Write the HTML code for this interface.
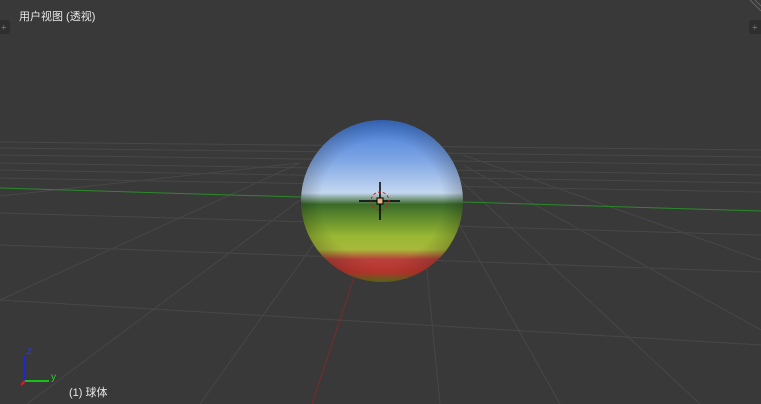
<!DOCTYPE html>
<html><head><meta charset="utf-8"><style>
html,body{margin:0;padding:0;background:#393939;width:761px;height:404px;overflow:hidden}
.t{position:absolute;font-family:"Liberation Sans","Noto Sans CJK SC",sans-serif;font-size:11px;color:#e6e6e6}
</style></head><body>
<svg width="761" height="404" style="position:absolute;left:0;top:0">
<defs>
<linearGradient id="sp" x1="0" y1="0" x2="0" y2="1">
<stop offset="0" stop-color="#3f78d8"/>
<stop offset="0.25" stop-color="#7fa6e4"/>
<stop offset="0.45" stop-color="#c4d7f0"/>
<stop offset="0.52" stop-color="#3a6a2a"/>
<stop offset="0.6" stop-color="#5f8a2c"/>
<stop offset="0.72" stop-color="#9ab834"/>
<stop offset="0.8" stop-color="#a8b83a"/>
<stop offset="0.86" stop-color="#b8403a"/>
<stop offset="0.94" stop-color="#c83a30"/>
<stop offset="1" stop-color="#6a7a20"/>
</linearGradient>
<radialGradient id="sh" cx="0.5" cy="0.5" r="0.5">
<stop offset="0.75" stop-color="#000" stop-opacity="0"/>
<stop offset="1" stop-color="#000" stop-opacity="0.2"/>
</radialGradient>
</defs>
<g stroke="#474747" stroke-width="1">
<line x1="0" y1="142" x2="761" y2="150"/>
<line x1="0" y1="148" x2="761" y2="157"/>
<line x1="0" y1="155" x2="761" y2="165"/>
<line x1="0" y1="163" x2="761" y2="175"/>
<line x1="0" y1="170" x2="761" y2="183"/>
<line x1="0" y1="178" x2="761" y2="192"/>
<line x1="0" y1="213" x2="761" y2="235"/>
<line x1="0" y1="245" x2="761" y2="272"/>
<line x1="0" y1="300" x2="761" y2="345"/>
<line x1="300" y1="163" x2="0" y2="300"/>
<line x1="300" y1="163" x2="0" y2="196"/>
<line x1="320" y1="185" x2="27" y2="404"/>
<line x1="345" y1="200" x2="200" y2="404"/>
<line x1="420" y1="200" x2="440" y2="404"/>
<line x1="440" y1="190" x2="560" y2="404"/>
<line x1="460" y1="180" x2="700" y2="404"/>
<line x1="463" y1="165" x2="761" y2="330"/>
<line x1="463" y1="155" x2="761" y2="260"/>
</g>
<line x1="0" y1="188" x2="761" y2="211" stroke="#2a8a2a" stroke-width="1"/>
<line x1="378" y1="205" x2="312" y2="404" stroke="#7a2a2a" stroke-width="1"/>
<circle cx="382" cy="201" r="81" fill="url(#sp)"/>
<circle cx="382" cy="201" r="81" fill="url(#sh)"/>
<g stroke="#000" stroke-width="1.5">
<line x1="380" y1="182" x2="380" y2="220"/>
<line x1="359" y1="201" x2="400" y2="201"/>
</g>
<circle cx="380" cy="201" r="9" fill="none" stroke="#d02020" stroke-dasharray="3 2"/>
<rect x="377" y="198" width="6" height="6" fill="#e8b080" stroke="#000"/>
<line x1="25" y1="382" x2="25" y2="355" stroke="#1a2ad0" stroke-width="2"/>
<line x1="25" y1="381" x2="49" y2="381" stroke="#1ac01a" stroke-width="2"/>
<line x1="25" y1="381" x2="21" y2="385" stroke="#d02020" stroke-width="2"/>
<text x="27" y="354" fill="#2a3ae0" font-size="10" font-family="Liberation Sans">z</text>
<text x="51" y="380" fill="#2ad02a" font-size="10" font-family="Liberation Sans">y</text>
<rect x="-4" y="20" width="14" height="14" rx="3" fill="#2e2e2e"/>
<rect x="749" y="20" width="14" height="14" rx="3" fill="#2e2e2e"/>
<text x="1" y="31" fill="#888" font-size="10">+</text>
<text x="752" y="31" fill="#888" font-size="10">+</text>
<line x1="750" y1="0" x2="761" y2="11" stroke="#666"/>
<line x1="755" y1="0" x2="761" y2="6" stroke="#666"/>
</svg>
<div class="t" style="left:19px;top:8px">用户视图 (透视)</div>
<div class="t" style="left:69px;top:384px">(1) 球体</div>
</body></html>
